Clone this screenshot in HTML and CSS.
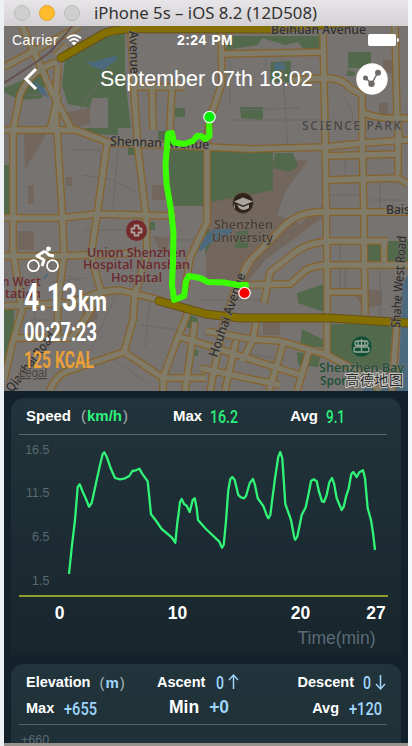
FILE: index.html
```html
<!DOCTYPE html>
<html lang="en">
<head>
<meta charset="utf-8">
<title>Ride summary</title>
<link rel="stylesheet" href="styles.css">
</head>
<body>
<main class="window">
  <header class="titlebar">
    <i class="light"></i><i class="light amber"></i><i class="light"></i>
    <svg class="caption" viewBox="0 0 230 26"><text x="1" y="18.5" textLength="223" lengthAdjust="spacingAndGlyphs">iPhone 5s – iOS 8.2 (12D508)</text></svg>
  </header>
  <section class="hero">
    <svg class="map" viewBox="4 26 404 365">
      <defs>
        <g id="roads">
          <path d="M4 67L80 26M22 26L40 65 52 92 72 130M57 62Q30 70 20 95L13 130M58 65L56 95V130M58 95L50 130M55 56L67 45"/>
          <path d="M4 130L76 130 110 143 160 145 206 147 250 149 325 147 365 143 408 140"/>
          <path d="M131 33L134 90 138 150 146 216 147 254 135 294 133 320 124 352 163 378V391"/>
          <path d="M134 87H185M152 87L153 130M172 87L170 130M221 33L222 83 210 118 206 148"/>
          <path d="M221 54L325 52M323 33L325 130 327 260 327 355M395 26L397 120 400 142"/>
          <path d="M292 80L325 78Q342 78 350 88L362 95V130L364 220 365 315M362 112Q376 120 408 118M340 26V33"/>
          <path d="M13 130V250L22 310 12 345 4 380M57 130L62 210 64 254 58 303 57 338M107 144L97 215 91 255 101 292 86 318 71 338M4 218H60L97 214 176 216"/>
          <path d="M4 256H60L140 253M207 150V222L190 258 185 290M325 156L398 154M398 130V175M327 180L398 178 408 184"/>
          <path d="M408 212H320Q300 212 285 225L247 264 238 285M388 241H330Q305 243 292 255L270 272 264 303M384 241V262M327 292H365"/>
          <path d="M240 285L290 284 306 270Q315 265 330 265L408 265"/>
          <path d="M4 306L70 303 101 292 120 290 160 300M15 338H71M124 352L65 372Q54 378 50 391M163 378H206M189 310L175 345 163 378M180 337L206 345 300 375"/>
          <path d="M250 262L235 290 222 330 210 391M206 331L250 339 280 341 327 355 365 375 380 391M256 322L253 340 242 361M397 320L392 391M284 341L269 391M310 347L297 391M200 368L280 385M195 322L185 391M236 340L225 391"/>
        </g>
      </defs>
      <rect x="4" y="26" width="404" height="365" class="land"/>
      <g class="brown">
        <path d="M206 206L262 160H308L285 192 277 215 300 224 325 202V216L265 260 245 285H206Z"/>
        <path d="M62 113L90 108V124L70 129ZM24 132H48L25 170ZM28 185H34V204H28ZM152 185H165V200H152ZM66 177H72V186H66ZM18 231H34V250H18ZM383 60H393V73H383ZM379 103H388V117H379ZM350 290H382V305L365 308ZM152 236L170 238 165 258ZM263 320H280V335H263ZM82 312L95 305 98 318 85 326ZM21 367H31V376H21Z"/>
      </g>
      <g class="green">
        <path d="M65 60L100 38 125 33V78L131 128H108V98H92L90 108 68 104 62 85ZM4 88L48 70 42 98 20 100 4 92Z"/>
        <path d="M168 148L273 152V190L211 202V190H206V206H171ZM275 153H293L298 166 290 172 273 168ZM348 52H371V68H348ZM348 70L355 72V76H346ZM232 36H322V51H305L298 42 285 45 262 38 258 45 225 50ZM240 107H263V120L241 118ZM271 62L291 61 290 82H270ZM175 108H185V117H175ZM158 131H167V140H158ZM128 148H135V155H128Z"/>
        <path d="M4 165H10V215H4ZM4 305H14V340L4 375ZM330 324H393L389 370 355 368 330 356ZM297 293L324 284V312L298 303ZM302 329L324 340V347H300ZM297 352L320 357 318 367 298 365ZM367 243H382V262H367ZM388 241H408V262H388ZM368 260H405V263H368ZM206 222L212 240 205 255ZM236 232L248 230V248H235ZM188 314L198 318 197 328H187ZM190 350H198V356H190ZM150 222H155V230H150ZM85 128H118V135L90 134Z"/>
      </g>
      <g class="water">
        <path d="M83 56Q90 65 97 61 107 57 117 56V60L108 66 104 70 91 66ZM32 80Q45 86 49 98L40 93ZM274 65Q283 57 286 69L275 71ZM195 248L212 230 233 228 230 234 209 244 201 251ZM402 285L408 275V391H398L400 350Z"/>
        <path d="M42 280L48 272 47 277ZM363 389L389 383 408 391V391H363Z"/>
      </g>
      <path class="lane" d="M76 115L108 70M70 150H100V200M83 175L113 180 136 192M118 150L112 216M230 60V104M266 52V78M240 110L300 108M230 120H322M342 96Q352 104 354 125M282 54L288 150M345 158V178M380 182V212M330 195H362M370 200H405M340 242V290M200 300H262M50 270L80 280M50 282L86 278M115 297L92 347M140 325L180 330M150 300L145 347M35 260V330M230 300V326M215 348L285 360M18 95H48M172 240H206M84 230H140M30 320H52M100 350L150 385M345 265V290M380 270V315"/>
      <use href="#roads" class="casing"/>
      <use href="#roads" class="surface"/>
      <path class="rail" d="M4 83L35 63 50 52 65 35 72 26"/>
      <g class="highway-edge"><path d="M61 58L105 33Q118 29 135 28.500L270 29 408 18"/><path d="M159 301L206 314 240 318H330L408 323"/></g>
      <g class="highway"><path d="M61 58L105 33Q118 29 135 28.500L270 29 408 18"/><path d="M159 301L206 314 240 318H330L408 323"/></g>
      <g class="label">
        <text x="271" y="33.500" textLength="95" lengthAdjust="spacingAndGlyphs">Beihuan Avenue</text>
        <text transform="translate(129 31) rotate(88)" textLength="43" lengthAdjust="spacingAndGlyphs">Avenue</text>
        <text transform="translate(110 145.500) rotate(2)" textLength="99" lengthAdjust="spacingAndGlyphs">Shennan Avenue</text>
        <text x="302" y="130" textLength="99" class="area">SCIENCE PARK</text>
        <text x="386" y="214" textLength="24" lengthAdjust="spacingAndGlyphs">Bais</text>
        <text transform="translate(217 358) rotate(-71)" textLength="88" lengthAdjust="spacingAndGlyphs">Houhai Avenue</text>
        <text transform="translate(400 328) rotate(-86)" textLength="92" lengthAdjust="spacingAndGlyphs">Shahe West Road</text>
        <text transform="translate(12 393) rotate(-52)" textLength="72" lengthAdjust="spacingAndGlyphs">Qianhai Road</text>
        <text x="19" y="377" class="legal" textLength="28" lengthAdjust="spacingAndGlyphs">Legal</text>
      </g>
      <g class="place campus"><text x="214" y="228.500" textLength="59" lengthAdjust="spacingAndGlyphs">Shenzhen</text><text x="212" y="241.500" textLength="61" lengthAdjust="spacingAndGlyphs">University</text></g>
      <g class="place clinic">
        <text x="87" y="256.500" textLength="99" lengthAdjust="spacingAndGlyphs">Union Shenzhen</text><text x="83" y="269" textLength="107" lengthAdjust="spacingAndGlyphs">Hospital Nanshan</text><text x="111" y="281.500" textLength="51" lengthAdjust="spacingAndGlyphs">Hospital</text>
        <text x="2" y="285.500" textLength="39" lengthAdjust="spacingAndGlyphs">n West</text><text x="5" y="298" textLength="36" lengthAdjust="spacingAndGlyphs">tation</text>
      </g>
      <g class="place sport"><text x="319" y="371.500" textLength="85" lengthAdjust="spacingAndGlyphs">Shenzhen Bay</text><text x="320" y="384.500" textLength="37" lengthAdjust="spacingAndGlyphs">Sports</text></g>
      <circle cx="136.500" cy="230.500" r="10.500" fill="#74292b"/>
      <path d="M134.500 225.500h4v3h3v4h-3v3h-4v-3h-3v-4h3Z" fill="none" stroke="#aaa09d" stroke-width="1.800" stroke-linejoin="round"/>
      <circle cx="243" cy="203" r="10.500" fill="#30241a" stroke="#655c50"/>
      <path d="M234 201.500L243 197.500 253 201.500 243 205.500ZM237 204.500L243 207 249 204.500V208Q243 212 239 208ZM235 202V208H234Z" fill="#aaa69f"/>
      <circle cx="361.500" cy="346.500" r="10.500" fill="#124d34" stroke="#426a51"/>
      <g fill="none" stroke="#99aa9d" stroke-width="1.300"><rect x="355" y="341" width="13" height="4.500" rx="2"/><rect x="354" y="347" width="15" height="5" rx="2"/><path d="M361.500 339v13M358 341v4M365 341v4"/></g>
      <text x="345" y="385" textLength="58" class="provider">高德地图</text>
      <path class="route" d="M209 118L209.500 136 205 139 201 136 197 136 193 141 184 144 174 142.500 172 133 168 134 165.500 165 166.500 184 171 210 173.500 233 173 262 172 284 174 300 184 296 186 281 189 276 200 278 208 282 224 282.500 238 285 246 285 245 290"/>
      <circle cx="209.500" cy="117" r="5.700" fill="#00ee08" stroke="#dfffe0" stroke-width="1.200"/>
      <circle cx="244.500" cy="293" r="5.700" fill="#f30000" stroke="#ffe5e5" stroke-width="1.300"/>
    </svg>
    <div class="overlay">
      <div class="status">
        <span class="carrier">Carrier</span>
        <svg class="wifi" viewBox="0 0 16 12"><path d="M1 4.200Q8-1.800 15 4.200M3.500 6.900Q8 3 12.500 6.900" fill="none" stroke="#fff" stroke-width="2"/><path d="M5.300 8.800Q8 6.500 10.700 8.800L8 11.600Z" fill="#fff"/></svg>
        <b class="clock">2:24 PM</b>
        <svg class="battery" viewBox="0 0 32 12"><rect width="28" height="12" rx="2" fill="#fff"/><path d="M29 4Q31 4 31 6T29 8Z" fill="#fff"/></svg>
      </div>
      <div class="nav">
        <svg class="back" viewBox="0 0 14 22"><path d="M12 1L2 11 12 21" fill="none" stroke="#fff" stroke-width="3"/></svg>
        <h1>September 07th 18:02</h1>
        <svg class="share" viewBox="0 0 32 32"><circle cx="16" cy="16" r="15.700" fill="#fff"/><path d="M10 15L15.500 21 21.500 10" fill="none" stroke="#6e6b68" stroke-width="1.500"/><g fill="#6e6b68"><circle cx="9.500" cy="15" r="2.500"/><circle cx="15.500" cy="20.700" r="3.200"/><circle cx="22" cy="9.800" r="3"/></g></svg>
      </div>
      <div class="stats">
        <svg class="bike" viewBox="0 0 34 28"><g fill="none" stroke="#fff"><circle cx="6.500" cy="19.700" r="5.500" stroke-width="1.700"/><circle cx="25.500" cy="19.700" r="5.500" stroke-width="1.700"/><path d="M18 5L10 10 17 14 15 20M18 5L22 9 27 10" stroke-width="3" stroke-linejoin="round"/></g><circle cx="21.500" cy="2.800" r="2.400" fill="#fff"/></svg>
        <svg class="figures" viewBox="0 0 90 90"><text x="0" y="28" class="km" textLength="53" lengthAdjust="spacingAndGlyphs">4.13</text><text x="54" y="28" class="unit" textLength="29" lengthAdjust="spacingAndGlyphs">km</text><text x="0" y="57.500" class="time" textLength="73" lengthAdjust="spacingAndGlyphs">00:27:23</text><text x="0" y="85" class="kcal" textLength="70" lengthAdjust="spacingAndGlyphs">125 KCAL</text></svg>
      </div>
    </div>
  </section>
  <section class="panels">
    <article class="card speed">
      <div class="head">
        <b>Speed</b><span class="measure">(<b>km/h</b>)</span><b class="max">Max</b><svg class="num" viewBox="0 0 29 20"><text y="17" textLength="28" lengthAdjust="spacingAndGlyphs">16.2</text></svg><b class="avg">Avg</b><svg class="num short" viewBox="0 0 20 20"><text y="17" textLength="19" lengthAdjust="spacingAndGlyphs">9.1</text></svg>
      </div>
      <svg class="chart" viewBox="11 435 390 219">
        <g class="tick" text-anchor="end"><text x="49.500" y="454">16.5</text><text x="49.500" y="497">11.5</text><text x="49.500" y="541">6.5</text><text x="49.500" y="585">1.5</text></g>
        <polyline class="trace" points="69,574 72,545 75,520 77.700,487 79.700,484.300 82.700,491.700 86,499 89,506.700 91.700,503 96.700,480 100,465 102.700,454 104.300,452.300 106.700,456.700 110.700,468.300 115,478 120,479.300 125,478.300 129.300,476 132.300,471 136,470.300 139.300,468.700 142,473.300 147.700,481.300 151,514.300 155.500,520 161.700,529 171.700,537.300 175.300,542.700 177.300,523 178.700,513 180,502 181.700,499 184,504 186.700,505.700 189.700,512 192.700,500 194.700,498.300 196.700,508 198,520 206,529 219.300,541.700 222,547.700 223.700,545 226,521 228.300,490 230.300,479 232.300,477 234.700,480 238.300,495 241,497.300 244,498.300 246,496 249.700,483.300 253,479 255,485 257.700,498.300 263.300,506 266.700,515 268.300,518.300 270.300,515 272,501.700 275,478.300 278.300,456.700 280.300,452 282.300,458.300 285.300,504 291,520 294.300,537.700 295.300,539.700 297.300,536.700 300.700,520 301.700,515 305.700,507.300 308.700,493.300 311,481 313.700,479.300 316.700,481.300 319,491.700 322,501.300 324,502 326.700,495 329.300,482.300 332,478 334,483.300 336.700,498.300 341.700,510 343.700,506.700 346,496.700 348.700,488.300 351.300,474 353.300,472 356.700,477 359.300,472.300 363,470.300 365,478.300 367.700,508.300 371,520 373,533 375,550"/>
        <path d="M19 596H388" stroke="#b9c62f" stroke-width="1.600"/>
        <g class="minutes" text-anchor="middle"><text x="59.500" y="618.500">0</text><text x="177.500" y="618.500">10</text><text x="300.500" y="618.500">20</text><text x="376" y="618.500">27</text></g>
        <text x="297.500" y="643.500" class="axis" textLength="78">Time(min)</text>
      </svg>
    </article>
    <article class="card elevation">
      <div class="grid">
        <div class="cell"><b>Elevation</b><span class="measure">(<b>m</b>)</span></div>
        <div class="cell ascent"><b>Ascent</b><svg class="zero" viewBox="0 0 24 20"><text y="17" textLength="8" lengthAdjust="spacingAndGlyphs">0</text><path d="M17.500 17V3M13 8L17.500 3 22 8"/></svg></div>
        <div class="cell end"><b>Descent</b><svg class="zero" viewBox="0 0 24 20"><text y="17" textLength="8" lengthAdjust="spacingAndGlyphs">0</text><path d="M17.500 3V17M13 12L17.500 17 22 12"/></svg></div>
        <div class="cell"><b>Max</b><svg class="num" viewBox="0 0 34 20"><text y="17" textLength="33" lengthAdjust="spacingAndGlyphs">+655</text></svg></div>
        <div class="cell min"><b>Min</b><b class="flat">+0</b></div>
        <div class="cell end second"><b>Avg</b><svg class="num" viewBox="0 0 34 20"><text y="17" textLength="33" lengthAdjust="spacingAndGlyphs">+120</text></svg></div>
      </div>
      <div class="cut">+660</div>
    </article>
  </section>
</main>
</body>
</html>
```
FILE: styles.css
```css
* { box-sizing: border-box; }
body { margin: 0; height: 746px; overflow: hidden; background: linear-gradient(90deg, #edf0f4 4px, #f5f6f7 408px); font-family: "Liberation Sans", sans-serif; color: #fff; }
svg { display: block; flex: none; overflow: visible; }
.window { width: 404px; height: 746px; margin-left: 4px; display: flex; flex-direction: column; overflow: hidden; border-bottom: 3px solid #96938f; }
.titlebar { height: 26px; flex: none; display: flex; align-items: center; padding-left: 10px; gap: 9px; background: linear-gradient(#e7e5e7, #d3d1d3); }
.light { width: 16px; height: 16px; border-radius: 50%; background: #d0cfd0; border: 1px solid #bdbcbd; }
.amber { background: #ffbd2e; border-color: #e4a52d; }
.caption { width: 230px; height: 26px; margin-left: 4px; }
.caption text { font: 16.5px "Noto Sans", sans-serif; fill: #343334; }

.hero { height: 365px; flex: none; display: grid; overflow: hidden; }
.map, .overlay { grid-area: 1 / 1; width: 404px; height: 365px; }
.overlay { position: relative; }
.land { fill: #777370; }
.green { fill: #52694b; }
.brown { fill: #73665d; }
.water { fill: #4b6a7d; }
.lane { fill: none; stroke: #6b6966; stroke-width: 1; }
.casing, .surface, .rail, .highway, .highway-edge { fill: none; stroke-linejoin: round; }
.casing { stroke: #86622a; stroke-width: 7.8; }
.surface { stroke: #807c69; stroke-width: 5.4; }
.rail { stroke: #65504f; stroke-width: 2; }
.highway-edge { stroke: #685019; stroke-width: 9; stroke-linecap: round; }
.highway { stroke: #847000; stroke-width: 7; stroke-linecap: round; }
.label text { font: 500 13px "Noto Sans", sans-serif; fill: #302f2e; stroke: #7a7673; stroke-width: 1.2px; paint-order: stroke; }
.label .area { font-size: 12px; fill: #484645; }
.label .legal { font: 12px "Liberation Sans", sans-serif; fill: #444; text-decoration: underline; }
.place text { font: 600 12.5px "Open Sans", sans-serif; stroke: #7a7673; stroke-width: 1px; paint-order: stroke; }
.campus { fill: #493d32; }
.clinic { fill: #6b292d; }
.sport { fill: #1d5037; }
.provider { font: 14px "Noto Sans CJK SC", sans-serif; fill: #292929; stroke: #c6c6c1; stroke-width: 2px; paint-order: stroke; }
.route { fill: none; stroke: #3aff00; stroke-width: 6; stroke-linejoin: round; stroke-linecap: round; }

.status { height: 26px; display: flex; align-items: center; padding: 1px 8px 0 8px; }
.carrier { width: 48px; font-size: 14px; letter-spacing: .5px; }
.wifi { width: 16px; height: 12px; margin-left: 6px; }
.clock { margin-left: 95px; font-size: 14px; letter-spacing: .45px; white-space: nowrap; }
.battery { width: 32px; height: 12px; margin-left: auto; }
.nav { height: 54px; display: flex; align-items: center; padding: 0 20px; }
.back { width: 14px; height: 22px; }
.nav h1 { margin: 0 auto 0 62px; font-size: 21.5px; font-weight: 400; white-space: nowrap; line-height: 54px; }
.share { width: 32px; height: 32px; }
.stats { padding: 140px 0 0 20px; }
.bike { width: 34px; height: 28px; margin-left: 3px; }
.figures { width: 90px; height: 90px; margin-top: 9px; }
.figures text { font-family: "Roboto", sans-serif; font-weight: 700; fill: #fff; }
.figures .km { font-size: 38px; }
.figures .unit { font-size: 28px; }
.figures .time { font-size: 25px; }
.figures .kcal { font-size: 23px; fill: #e8a039; }

.panels { flex: 1; padding: 7px; background: #13222a; overflow: hidden; }
.card { border-radius: 13px 13px 0 0; background: linear-gradient(#22343b, #18252d); }
.speed { height: 257px; margin-bottom: 9px; }
.head { height: 37px; margin: 0 14px 0 8px; padding: 0 0 1px 7px; display: flex; align-items: center; border-bottom: 1px solid #59666c; font-size: 15px; }
.measure { margin-left: 10px; color: #aab4b7; font-size: 15px; }
.measure b { color: #2bf17b; margin: 0 1px; }
.max { margin-left: 45px; }
.num { width: 34px; height: 20px; margin-left: 10px; }
.head .num { width: 29px; margin-left: 8px; }
.avg { margin-left: 51px; }
.head .short { width: 20px; }
.num text, .zero text { font: 500 19px "Roboto", sans-serif; fill: #9fd5fb; }
.head .num text { fill: #2bf17b; }
.chart { width: 390px; height: 219px; }
.tick { font-size: 12.5px; fill: #596970; }
.trace { fill: none; stroke: #31f477; stroke-width: 2.3; stroke-linejoin: round; }
.minutes { font-size: 17.5px; font-weight: 700; fill: #fff; }
.axis { font-size: 17.5px; fill: #5b6b76; }

.elevation { height: 150px; background: linear-gradient(#22343b, #1d2d34); }
.grid { height: 61px; margin: 0 14px 0 8px; padding: 5px 0 4px 7px; display: grid; grid-template-columns: 131px 110px 1fr; grid-template-rows: 26px 25px; border-bottom: 1px solid #59666c; font-size: 14.5px; }
.cell { display: flex; align-items: center; white-space: nowrap; }
.elevation .measure { margin-left: 9px; }
.elevation .measure b { color: #9fd5fb; }
.zero { width: 24px; height: 20px; margin-left: 9px; }
.ascent .zero { margin-left: 11px; }
.zero path { fill: none; stroke: #9fd5fb; stroke-width: 1.5; }
.end { justify-content: flex-end; }
.second { padding-right: 4px; }
.min { padding-left: 12px; font-size: 17.5px; }
.min .flat { margin-left: 10px; color: #9fd5fb; }
.cut { padding: 8px 0 0 10px; font-size: 12.5px; line-height: 14px; color: #596970; }
```
